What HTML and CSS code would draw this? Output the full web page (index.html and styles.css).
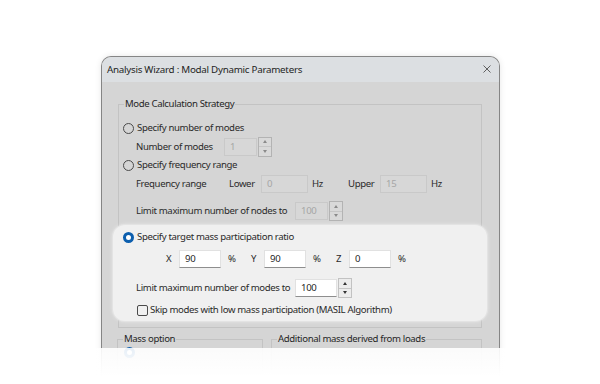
FILE: index.html
```html
<!DOCTYPE html>
<html>
<head>
<meta charset="utf-8">
<link rel="stylesheet" href="styles.css">
</head>
<body>
<div class="page">
  <div class="dialog">
    <div class="titlebar">
      <span class="title">Analysis Wizard : Modal Dynamic Parameters</span>
      <svg class="close" width="8" height="8" viewBox="0 0 8 8"><path d="M0.5 0.5L7.5 7.5M7.5 0.5L0.5 7.5" stroke="#505050" stroke-width="0.9" fill="none"/></svg>
    </div>
    <div class="content">
      <fieldset class="group strategy">
        <legend>Mode Calculation Strategy</legend>
        <div class="row r1"><span class="radio"></span><span class="rlabel">Specify number of modes</span></div>
        <div class="row sub r2">
          <span class="lbl w-num">Number of modes</span>
          <span class="spin"><span class="field dis sm">1</span><span class="btns dis"><i class="up"></i><i class="dn"></i></span></span>
        </div>
        <div class="row r3"><span class="radio"></span><span class="rlabel">Specify frequency range</span></div>
        <div class="row sub r4">
          <span class="lbl w-freq">Frequency range</span>
          <span class="lbl w-lu">Lower</span>
          <span class="field dis md">0</span>
          <span class="lbl w-hz">Hz</span>
          <span class="lbl w-lu">Upper</span>
          <span class="field dis md">15</span>
          <span class="lbl hz2">Hz</span>
        </div>
        <div class="row sub r5">
          <span class="lbl w-lim">Limit maximum number of nodes to</span>
          <span class="spin"><span class="field dis sm">100</span><span class="btns dis"><i class="up"></i><i class="dn"></i></span></span>
        </div>
        <div class="focus">
          <div class="row p1"><span class="radio on"></span><span class="rlabel">Specify target mass participation ratio</span></div>
          <div class="row p2">
            <span class="axis">X</span><span class="field en">90</span><span class="pct">%</span>
            <span class="axis">Y</span><span class="field en">90</span><span class="pct">%</span>
            <span class="axis">Z</span><span class="field en">0</span><span class="pct">%</span>
          </div>
          <div class="row p3">
            <span class="lbl w-lim">Limit maximum number of modes to</span>
            <span class="spin"><span class="field en sm">100</span><span class="btns en"><i class="up"></i><i class="dn"></i></span></span>
          </div>
          <div class="row p4"><span class="check"></span><span class="clabel">Skip modes with low mass participation (MASIL Algorithm)</span></div>
        </div>
      </fieldset>
      <div class="lower">
        <fieldset class="group mass">
          <legend>Mass option</legend>
          <div class="row m1"><span class="radio on"></span></div>
        </fieldset>
        <fieldset class="group addl">
          <legend>Additional mass derived from loads</legend>
        </fieldset>
      </div>
    </div>
  </div>
  <div class="fade"></div>
</div>
</body>
</html>
```
FILE: styles.css
```css
html, body {
  margin: 0;
  padding: 0;
  background: #ffffff;
  overflow: hidden;
}
.page {
  position: relative;
  width: 600px;
  height: 384px;
  overflow: hidden;
  font-family: "Noto Sans", "Open Sans", sans-serif;
  font-size: 9.6px;
  letter-spacing: -0.36px;
  line-height: 14px;
  color: #2a2a2a;
}
.dialog {
  box-sizing: border-box;
  margin: 56px 0 0 101px;
  width: 399px;
  height: 340px;
  border: 1px solid #858585;
  border-bottom: none;
  border-radius: 10px 10px 0 0;
  background: #d5d5d5;
  box-shadow: 0 0 6px rgba(0, 0, 0, 0.10);
  overflow: hidden;
}
.titlebar {
  height: 25px;
  background: #dcdfe2;
  display: flex;
  align-items: center;
  justify-content: space-between;
  padding: 0 8px 0 5px;
}
.title {
  font-size: 9.8px;
  letter-spacing: -0.27px;
  color: #1f1f1f;
}
.close { display: block; margin-top: -1px; }
.content {
  display: flex;
  flex-direction: column;
}
.group {
  margin: 0;
  padding: 0;
  border: 1px solid #c3c3c3;
  min-width: 0;
}
.group legend {
  margin-left: 5px;
  padding: 0 1px;
  line-height: 14px;
  color: #262626;
}
.strategy {
  margin: 15px 17px 0 16px;
  padding: 8px 0 6px 0;
  display: flex;
  flex-direction: column;
}
.row {
  display: flex;
  align-items: center;
  height: 18px;
  padding-left: 4px;
  white-space: nowrap;
}
.row.sub { padding-left: 17px; }
.r2 { height: 19px; }
.r4 { margin-top: 1px; }
.r5 { margin-top: 9px; }
.radio {
  box-sizing: border-box;
  width: 11px;
  height: 11px;
  border: 1px solid #4a4a4a;
  border-radius: 50%;
  flex: none;
}
.radio.on {
  border: 3.5px solid #0d5fae;
  background: #ffffff;
}
.rlabel { margin-left: 3px; }
.lbl { flex: none; }
.w-num { width: 88px; }
.w-freq { width: 93px; }
.w-lu { width: 32px; }
.w-hz { width: 36px; padding-left: 4px; }
.hz2 { padding-left: 4px; }
.w-lim { width: 159px; }
.field {
  box-sizing: border-box;
  height: 18px;
  display: flex;
  align-items: center;
  padding-left: 5px;
  flex: none;
}
.field.dis {
  border: 1px solid #c9c9c9;
  color: #a6a6a6;
  background: #d7d7d7;
}
.field.sm { width: 33px; height: 18px; }
.field.md { width: 47px; }
.field.en {
  width: 42px;
  background: #ffffff;
  border: 1px solid #e1e1e1;
  border-bottom: 1px solid #8e8e8e;
  color: #1f1f1f;
}
.spin { display: flex; align-items: center; }
.btns {
  box-sizing: border-box;
  width: 14px;
  height: 20px;
  display: flex;
  flex-direction: column;
  border: 1px solid #b3b3b3;
  margin-left: 1px;
}
.btns i {
  flex: 1;
  display: flex;
  align-items: center;
  justify-content: center;
}
.btns i::before {
  content: "";
  width: 0;
  height: 0;
  border-left: 2.5px solid transparent;
  border-right: 2.5px solid transparent;
}
.btns .up { border-bottom: 1px solid #c6c6c6; }
.btns .up::before { border-bottom: 3px solid #6e6e6e; }
.btns .dn::before { border-top: 3px solid #6e6e6e; }
.btns.dis { background: #d9d9d9; }
.btns.dis .up::before { border-bottom-color: #8a8a8a; }
.btns.dis .dn::before { border-top-color: #8a8a8a; }
.btns.en { background: #ececec; border-color: #c2c2c2; }
.btns.en .up::before { border-bottom-color: #333; }
.btns.en .dn::before { border-top-color: #333; }
.focus {
  margin: 5px -6px 0 -6px;
  padding: 3px 0 2px 10px;
  background: #f0f0f0;
  border-radius: 12px;
  box-shadow: 0 0 0 1px #e3e3e3, 0 0 4px rgba(255, 255, 255, 0.6);
  display: flex;
  flex-direction: column;
  position: relative;
}
.focus .row { padding-left: 0; }
.p2 { margin-top: 4px; padding-left: 43px !important; }
.p3 { margin-top: 11px; padding-left: 13px !important; }
.p4 { margin-top: 4px; padding-left: 14px !important; }
.axis { width: 13px; flex: none; }
.pct { width: 30px; padding-left: 7px; box-sizing: border-box; flex: none; }
.check {
  box-sizing: border-box;
  width: 11px;
  height: 11px;
  border: 1px solid #4a4a4a;
  border-radius: 2px;
  flex: none;
}
.clabel { margin-left: 2px; }
.lower {
  display: grid;
  grid-template-columns: 146px 211px;
  column-gap: 8px;
  margin: 4px 0 0 15px;
}
.mass, .addl { height: 40px; }
.m1 { padding-left: 6px; margin-top: -3px; }
.fade {
  position: absolute;
  left: 0;
  right: 0;
  top: 348px;
  height: 36px;
  background: linear-gradient(to bottom, rgba(255, 255, 255, 0.9), #ffffff 80%);
}
```
